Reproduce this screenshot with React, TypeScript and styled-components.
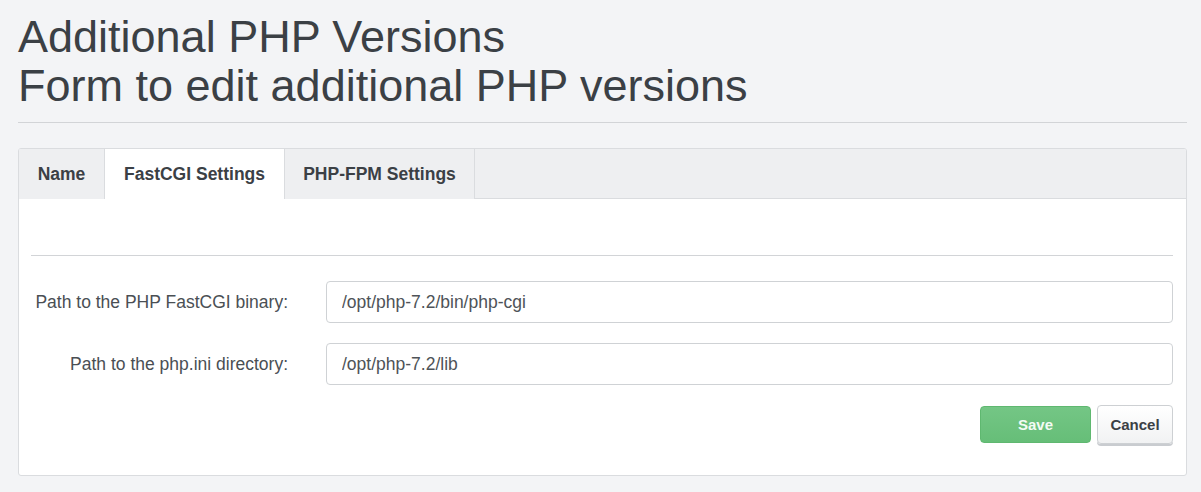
import React, { useState } from 'react'
import styled, { createGlobalStyle } from 'styled-components'

const GlobalStyle = createGlobalStyle`
    html, body {
        margin: 0;
        padding: 0;
        background: #f3f4f6;
        font-family: "Liberation Sans", Arial, sans-serif;
        color: #3b4045;
    }
    * { box-sizing: border-box; }
`

const Page = styled.div`
    padding: 12px 14px 16px 18px;
`

const Title = styled.h1`
    margin: 0 0 0 0;
    font-size: 45px;
    font-weight: 400;
    line-height: 49px;
    color: #3b4045;
`

const Rule = styled.hr`
    border: 0;
    border-top: 1px solid #d2d4d7;
    margin: 12px 0 25px 0;
`

const Panel = styled.div`
    background: #fff;
    border: 1px solid #dadcdf;
    border-radius: 3px;
    overflow: hidden;
`

const TabBar = styled.div`
    display: flex;
    background: #eeeff1;
    border-bottom: 1px solid #dadcdf;
    height: 50px;
`

const Tab = styled.button<{ $active?: boolean; $width: number }>`
    width: ${p => p.$width}px;
    height: 50px;
    margin-bottom: -1px;
    padding: 0;
    border: 0;
    border-right: 1px solid #dadcdf;
    background: ${p => (p.$active ? '#fff' : '#eeeff1')};
    font-family: "Liberation Sans", Arial, sans-serif;
    font-size: 17.5px;
    font-weight: 700;
    color: #3b4045;
    cursor: pointer;
`

const Body = styled.div`
    padding: 56px 13px 31px 12px;
`

const Divider = styled.hr`
    border: 0;
    border-top: 1px solid #d2d4d7;
    margin: 0 0 25px 0;
`

const Row = styled.div`
    display: grid;
    grid-template-columns: 257px 1fr;
    column-gap: 38px;
    align-items: center;
    margin-bottom: 20px;
`

const Label = styled.label`
    text-align: right;
    font-size: 17.5px;
    color: #4a4f54;
`

const Input = styled.input`
    height: 42px;
    width: 100%;
    padding: 0 15px;
    border: 1px solid #cfd2d5;
    border-radius: 4px;
    background: #fff;
    font-family: "Liberation Sans", Arial, sans-serif;
    font-size: 17.5px;
    color: #4e5358;
    outline: none;
`

const Actions = styled.div`
    display: flex;
    justify-content: flex-end;
    align-items: center;
    gap: 6px;
    margin-top: 1px;
`

const Button = styled.button<{ $primary?: boolean }>`
    height: ${p => (p.$primary ? 37 : 39)}px;
    width: ${p => (p.$primary ? 111 : 76)}px;
    padding: 0;
    border-radius: 4px;
    font-family: "Liberation Sans", Arial, sans-serif;
    font-size: 15px;
    font-weight: 700;
    cursor: pointer;
    border: 1px solid ${p => (p.$primary ? '#5fb870' : '#cdd0d3')};
    background: ${p => (p.$primary
        ? 'linear-gradient(#74c685, #66be78)'
        : 'linear-gradient(#ffffff, #f1f2f3)')};
    color: ${p => (p.$primary ? '#f4fbf5' : '#3b4045')};
    box-shadow: ${p => (p.$primary ? 'none' : '0 2px 0 #c9ccd0')};
`

const tabs = [
    { key: 'name', label: 'Name', width: 86 },
    { key: 'fcgi', label: 'FastCGI Settings', width: 180 },
    { key: 'fpm', label: 'PHP-FPM Settings', width: 190 },
]

export default function App() {
    const [active, setActive] = useState('fcgi')
    const [binary, setBinary] = useState('/opt/php-7.2/bin/php-cgi')
    const [iniDir, setIniDir] = useState('/opt/php-7.2/lib')

    return (
        <>
            <GlobalStyle />
            <Page>
                <Title>
                    Additional PHP Versions
                    <br />
                    Form to edit additional PHP versions
                </Title>
                <Rule />
                <Panel>
                    <TabBar>
                        {tabs.map(t => (
                            <Tab
                                key={t.key}
                                $active={active === t.key}
                                $width={t.width}
                                onClick={() => setActive(t.key)}
                            >
                                {t.label}
                            </Tab>
                        ))}
                    </TabBar>
                    <Body>
                        <Divider />
                        <Row>
                            <Label>Path to the PHP FastCGI binary:</Label>
                            <Input value={binary} onChange={e => setBinary(e.target.value)} />
                        </Row>
                        <Row>
                            <Label>Path to the php.ini directory:</Label>
                            <Input value={iniDir} onChange={e => setIniDir(e.target.value)} />
                        </Row>
                        <Actions>
                            <Button $primary>Save</Button>
                            <Button>Cancel</Button>
                        </Actions>
                    </Body>
                </Panel>
            </Page>
        </>
    )
}
